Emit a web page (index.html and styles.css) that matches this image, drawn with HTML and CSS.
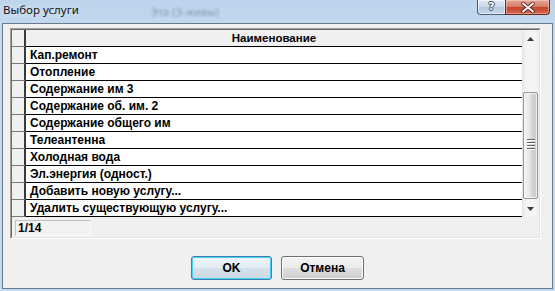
FILE: index.html
```html
<!DOCTYPE html>
<html>
<head>
<meta charset="utf-8">
<link rel="stylesheet" href="styles.css">
</head>
<body>
<div class="window">
  <div class="titlebar">
    <span class="title">Выбор услуги</span>
    <span class="ghost">Эта (Э-живы)</span>
    <div class="caption-btns">
      <div class="cap help"><span>?</span></div>
      <div class="cap close">
        <svg width="14" height="11" viewBox="0 0 14 11"><path d="M2 1.5 L12 9.5 M12 1.5 L2 9.5" stroke="#5a1f16" stroke-width="3.6" stroke-linecap="round"/><path d="M2 1.5 L12 9.5 M12 1.5 L2 9.5" stroke="#fff" stroke-width="2" stroke-linecap="round"/></svg>
      </div>
    </div>
  </div>
  <div class="client">
    <div class="gridpanel">
      <div class="gridinner">
        <div class="gridbody">
          <div class="table">
            <div class="row head"><div class="ind"></div><div class="cell">Наименование</div></div>
            <div class="row"><div class="ind"></div><div class="cell">Кап.ремонт</div></div>
            <div class="row"><div class="ind"></div><div class="cell">Отопление</div></div>
            <div class="row"><div class="ind"></div><div class="cell">Содержание им 3</div></div>
            <div class="row"><div class="ind"></div><div class="cell">Содержание об. им. 2</div></div>
            <div class="row"><div class="ind"></div><div class="cell">Содержание общего им</div></div>
            <div class="row"><div class="ind"></div><div class="cell">Телеантенна</div></div>
            <div class="row"><div class="ind"></div><div class="cell">Холодная вода</div></div>
            <div class="row"><div class="ind"></div><div class="cell">Эл.энергия (одност.)</div></div>
            <div class="row"><div class="ind"></div><div class="cell">Добавить новую услугу...</div></div>
            <div class="row"><div class="ind"></div><div class="cell">Удалить существующую услугу...</div></div>
          </div>
          <div class="scrollbar">
            <div class="arrow"><svg width="7" height="4" viewBox="0 0 7 4"><path d="M0 4 L3.5 0 L7 4 Z" fill="#3c3c3c"/></svg></div>
            <div class="track">
              <div class="thumb">
                <div class="grip"><i></i><i></i><i></i><i></i></div>
              </div>
            </div>
            <div class="arrow"><svg width="7" height="4" viewBox="0 0 7 4"><path d="M0 0 L7 0 L3.5 4 Z" fill="#3c3c3c"/></svg></div>
          </div>
        </div>
        <div class="status"><div class="counter">1/14</div></div>
      </div>
    </div>
    <div class="buttons">
      <button class="btn default ok">OK</button>
      <button class="btn cancel">Отмена</button>
    </div>
  </div>
</div>
</body>
</html>
```
FILE: styles.css
```css
* { box-sizing: border-box; }
html, body { margin: 0; padding: 0; }
body { width: 555px; height: 291px; overflow: hidden; background: #c4daf1; }

.window {
  width: 555px; height: 291px;
  display: flex; flex-direction: column;
  background: linear-gradient(#bcd4ec 0, #c6dbf1 40px, #c4daf1 100%);
}

.titlebar {
  height: 23px; flex: none;
  display: flex; align-items: flex-start;
  position: relative;
}
.title {
  font-family: "Noto Sans", "Open Sans", sans-serif;
  font-size: 11.5px; color: #111;
  margin: 2px 0 0 3px; line-height: 16px;
  text-shadow: 0 0 6px rgba(255,255,255,0.9);
}
.ghost {
  font-family: "Noto Sans", sans-serif; font-size: 11px;
  color: #8a9cb4; margin: 4px 0 0 72px; filter: blur(1.3px);
}
.caption-btns { margin-left: auto; margin-right: 5px; display: flex; }
.cap { height: 15px; border: 1px solid #4d5d70; border-top: none; display: flex; align-items: center; justify-content: center; }
.help {
  width: 28px; border-radius: 0 0 0 4px; border-right: none;
  background: linear-gradient(#dfe9f4, #c9d8e9 50%, #b7c9de 51%, #c4d6ea);
  box-shadow: inset 0 0 0 1px rgba(255,255,255,0.55);
}
.help span {
  font-family: "DejaVu Sans", sans-serif; font-weight: bold; font-size: 11px; color: #fff;
  line-height: 12px;
  text-shadow: 1px 0 0 #3a4b60, -1px 0 0 #3a4b60, 0 1px 0 #3a4b60, 0 -1px 0 #3a4b60;
}
.close {
  width: 45px; border-radius: 0 0 4px 0; border-color: #6b2418;
  background: linear-gradient(#e5a89a, #d27a68 50%, #c2452f 51%, #d4654c);
  box-shadow: inset 0 0 0 1px rgba(255,220,210,0.45);
}

.client {
  margin: 0 2px 0 2px;
  height: 266px;
  border: 1px solid #6c7a88;
  background: #f0f0f0;
  padding: 4px 0 0 7px;
  display: flex; flex-direction: column;
}

.gridpanel {
  width: 531px; height: 211px;
  border: 1px solid; border-color: #a0a0a0 #fff #fff #a0a0a0;
}
.gridinner {
  height: 100%;
  border: 1px solid; border-color: #696969 #e3e3e3 #e3e3e3 #696969;
  display: flex; flex-direction: column;
  background: #f0f0f0;
}
.gridbody { display: flex; }
.table { flex: 1; display: flex; flex-direction: column; background: #fff; }
.row { display: flex; height: 17px; }
.ind {
  width: 14px; flex: none;
  background: #f0f0f0;
  border-right: 2px solid #3a3a3a;
  border-bottom: 1px solid #7a7a7a;
}
.cell {
  flex: 1;
  border-bottom: 1px solid #000;
  font-family: "Liberation Sans", Arial, sans-serif;
  font-weight: bold; font-size: 12px; color: #000;
  line-height: 16px; padding-left: 4px;
  white-space: nowrap; overflow: hidden;
}
.head .cell { background: #f0f0f0; text-align: center; padding-left: 0; font-size: 11.5px; }

.scrollbar {
  width: 17px; flex: none;
  display: flex; flex-direction: column;
  background: linear-gradient(90deg, #e3e3e3, #f2f2f2 3px, #f5f5f5 14px, #ececec);
}
.arrow { height: 17px; flex: none; display: flex; align-items: center; justify-content: center; }
.track { flex: 1; padding: 45px 1px 0 1px; }
.thumb {
  height: 107px;
  border: 1px solid #959595; border-radius: 2px;
  background: linear-gradient(90deg, #f3f3f3, #e6e6e6 45%, #d6d6d6 55%, #cbcbcb);
  box-shadow: inset 0 0 0 1px rgba(255,255,255,0.7);
  display: flex; align-items: center; justify-content: center;
}
.grip { display: flex; flex-direction: column; gap: 1px; margin-top: -2px; }
.grip i { display: block; width: 8px; background: #606060; border-bottom: 1px solid #fff; height: 2px; }

.status { flex: 1; padding: 3px 0 0 3px; }
.counter {
  width: 76px; height: 16px;
  border: 1px solid; border-color: #c0c0c0 #fafafa #fafafa #c0c0c0;
  background: #f2f2f2;
  font-family: "Liberation Sans", Arial, sans-serif;
  font-weight: bold; font-size: 12px; line-height: 14px; padding-left: 2px;
}

.buttons {
  display: flex; justify-content: center; gap: 9px;
  margin: 17px 0 0 -7px;
}
.btn {
  height: 24px; padding: 0;
  border: 1px solid #707070; border-radius: 3px;
  background: linear-gradient(#f2f2f2, #ebebeb 50%, #dddddd 51%, #cfcfcf);
  box-shadow: inset 0 0 0 1px #fcfcfc;
  font-family: "Liberation Sans", Arial, sans-serif;
  font-weight: bold; font-size: 12px; color: #000;
}
.ok { width: 81px; }
.cancel { width: 83px; }
.default {
  border-color: #3c7fb1;
  background: linear-gradient(#eef4f9, #e3ecf3 50%, #d5e1ea 51%, #ccd9e3);
  box-shadow: inset 0 0 0 1px #48d0f4;
}
```
